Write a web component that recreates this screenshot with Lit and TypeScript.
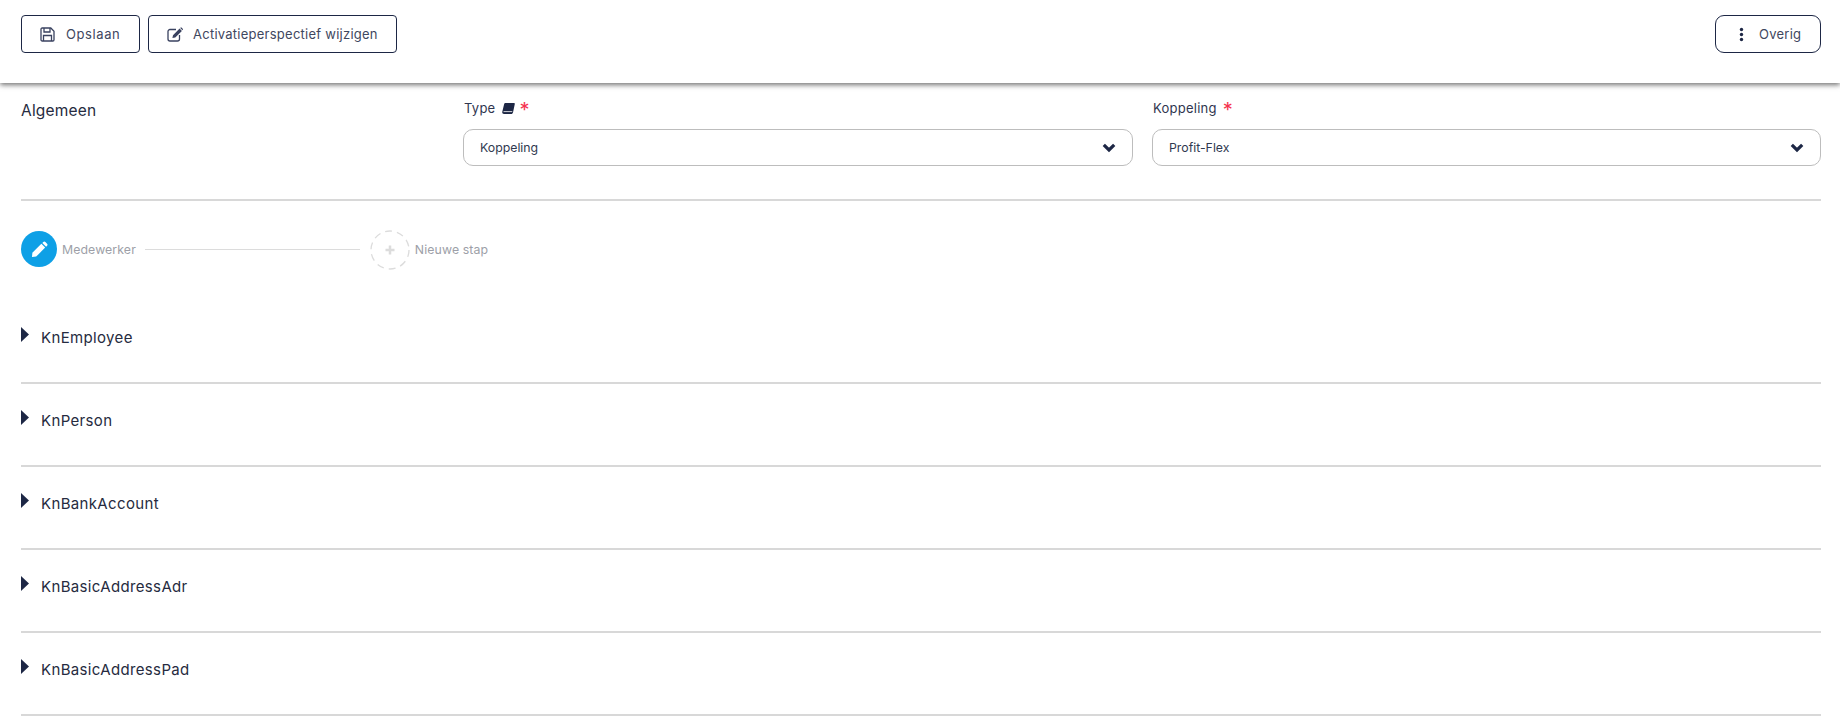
import { LitElement, html, css, svg } from "lit";
import { customElement } from "lit/decorators.js";

const chevron = html`<svg class="chev" viewBox="0 0 14 10"><path fill="none" stroke="#1d2745" stroke-width="3.200" d="M1.800 1.800 7 7l5.200-5.200"/></svg>`;

@customElement("app-root")
export class AppRoot extends LitElement {
  static styles = css`
    :host { display: block; font-family: "Inter", "Liberation Sans", sans-serif; color: #1d2745; background: #fff; height: 723px; overflow: hidden; }
    .bar { height: 83px; box-sizing: border-box; padding: 15px 19px 0 21px; display: flex; gap: 8px; box-shadow: 0 2px 5px rgba(0,0,0,.55); position: relative; }
    .btn { height: 38px; box-sizing: border-box; border: 1.5px solid #1d2745; border-radius: 4px; display: flex; align-items: center; font-size: 13px; color: #3f4760; letter-spacing: .25px; background: #fff; }
    .save { width: 119px; padding-left: 18px; gap: 11px; letter-spacing: .6px; }
    .edit { width: 249px; padding-left: 18px; gap: 9px; }
    .more { width: 106px; padding-left: 23px; gap: 15px; margin-left: auto; border-radius: 9px; }
    .general { display: grid; grid-template-columns: 423px 670px 669px; column-gap: 19px; height: 116px; border-bottom: 2px solid #d8d8d8; margin: 0 19px 0 21px; }
    .title { font-size: 15.5px; letter-spacing: .2px; color: #262b40; padding-top: 18px; line-height: 20px; }
    .field { padding-top: 15px; }
    .label { font-size: 13px; height: 20px; line-height: 20px; display: flex; align-items: center; gap: 4px; color: #30364f; margin-left: 1px; letter-spacing: .25px; }
    .star { color: #f5334f; font-size: 20px; line-height: 20px; padding-top: 3px; }
    .star.far { margin-left: 2px; }
    .book { margin-left: 3px; }
    .select { height: 37px; margin-top: 11px; box-sizing: border-box; border: 1px solid #bdbdbd; border-radius: 10px; display: flex; align-items: center; justify-content: space-between; padding: 0 16px 0 16px; font-size: 12.300px; color: #303a50; }
    .chev { width: 14px; height: 10px; }
    .steps { display: flex; align-items: center; padding: 30px 0 0 21px; height: 38px; }
    .circle { width: 36px; height: 36px; border-radius: 50%; background: #0ea0e6; display: flex; align-items: center; justify-content: center; margin-top: -2px; }
    .steplabel { font-size: 12.300px; color: #9d9fa8; margin: -2px 0 0 5px; letter-spacing: .1px; }
    .line { width: 215px; height: 1px; background: #dcdcdc; margin: -2px 10px 0 9px; }
    .add { width: 40px; height: 40px; box-sizing: border-box; display: block; }
    .row { margin: 0 19px 0 21px; height: 83px; box-sizing: border-box; border-bottom: 2px solid #d8d8d8; display: flex; }
    .list { padding-top: 32px; }
    .caret { width: 8px; height: 15px; margin-top: 26px; }
    .name { font-size: 15px; line-height: 20px; margin: 27px 0 0 12px; color: #262b40; letter-spacing: .35px; }
  `;

  render() {
    const names = ["KnEmployee", "KnPerson", "KnBankAccount", "KnBasicAddressAdr", "KnBasicAddressPad"];
    return html`
      <div class="bar">
        <div class="btn save">
          <svg width="15" height="15" viewBox="0 0 15 15" fill="none" stroke="#3a4260" stroke-width="1.3"><path d="M1 2.2C1 1.5 1.5 1 2.2 1h8.6L14 4.2v8.6c0 .7-.5 1.2-1.2 1.2H2.2C1.5 14 1 13.500 1 12.800z"/><path d="M4 1v4h6V1M3.500 14V8.500h8V14"/></svg>
          <span>Opslaan</span>
        </div>
        <div class="btn edit">
          <svg width="17" height="15" viewBox="0 0 17 15" fill="none" stroke="#3a4260" stroke-width="1.3"><path d="M9 2.500H3C1.900 2.500 1 3.400 1 4.500V12c0 1.100.9 2 2 2h7.500c1.100 0 2-.9 2-2V8"/><path fill="#3a4260" stroke="none" d="M6 8.200 12.600 1.600l2.300 2.300-6.600 6.600-2.900.6zM13.400.8c.4-.4 1-.4 1.400 0l.9.9c.4.4.4 1 0 1.400l-.2.2-2.300-2.300z"/></svg>
          <span>Activatieperspectief wijzigen</span>
        </div>
        <div class="btn more">
          <svg width="5" height="15" viewBox="0 0 5 15" fill="#1d2745"><circle cx="2.500" cy="2.500" r="1.700"/><circle cx="2.500" cy="7.500" r="1.700"/><circle cx="2.500" cy="12.500" r="1.700"/></svg>
          <span>Overig</span>
        </div>
      </div>
      <div class="general">
        <div class="title">Algemeen</div>
        <div class="field">
          <div class="label">Type
            <svg class="book" width="13" height="11" viewBox="0 0 13 11"><path fill="#1d2745" d="M3.500 0H12c.6 0 1 .4.800 1L11 9.500c-.2.900-.9 1.500-1.800 1.500H2C.7 11 0 10 .3 8.800L2.100 1.200C2.300.5 2.800 0 3.500 0z"/><path stroke="#fff" stroke-width=".8" d="M1.500 8.600h8.800"/></svg>
            <span class="star">*</span>
          </div>
          <div class="select"><span>Koppeling</span>${chevron}</div>
        </div>
        <div class="field">
          <div class="label">Koppeling <span class="star far">*</span></div>
          <div class="select"><span>Profit-Flex</span>${chevron}</div>
        </div>
      </div>
      <div class="steps">
        <div class="circle">
          <svg width="17" height="17" viewBox="0 0 18 18"><path fill="#fff" d="M1.500 12.500 11 3l4 4-9.500 9.500-4.500.5z"/><path fill="#fff" d="M12 2l1-1c.7-.7 1.600-.7 2.200 0l1.800 1.800c.7.600.7 1.500 0 2.200l-1 1z"/></svg>
        </div>
        <span class="steplabel">Medewerker</span>
        <div class="line"></div>
        <svg class="add" viewBox="0 0 40 40" fill="none"><circle cx="20" cy="20" r="19" stroke="#dcdcdc" stroke-width="1.300" stroke-dasharray="7 5"/><path d="M20 15.500v9M15.500 20h9" stroke="#dcdcdc" stroke-width="2.500"/></svg>
        <span class="steplabel">Nieuwe stap</span>
      </div>
      <div class="list">
        ${names.map(n => html`<div class="row">
          <svg class="caret" viewBox="0 0 8 15">${svg`<path fill="#1d2745" d="M0 0l8 7.500-8 7.500z"/>`}</svg>
          <span class="name">${n}</span>
        </div>`)}
      </div>
    `;
  }
}
